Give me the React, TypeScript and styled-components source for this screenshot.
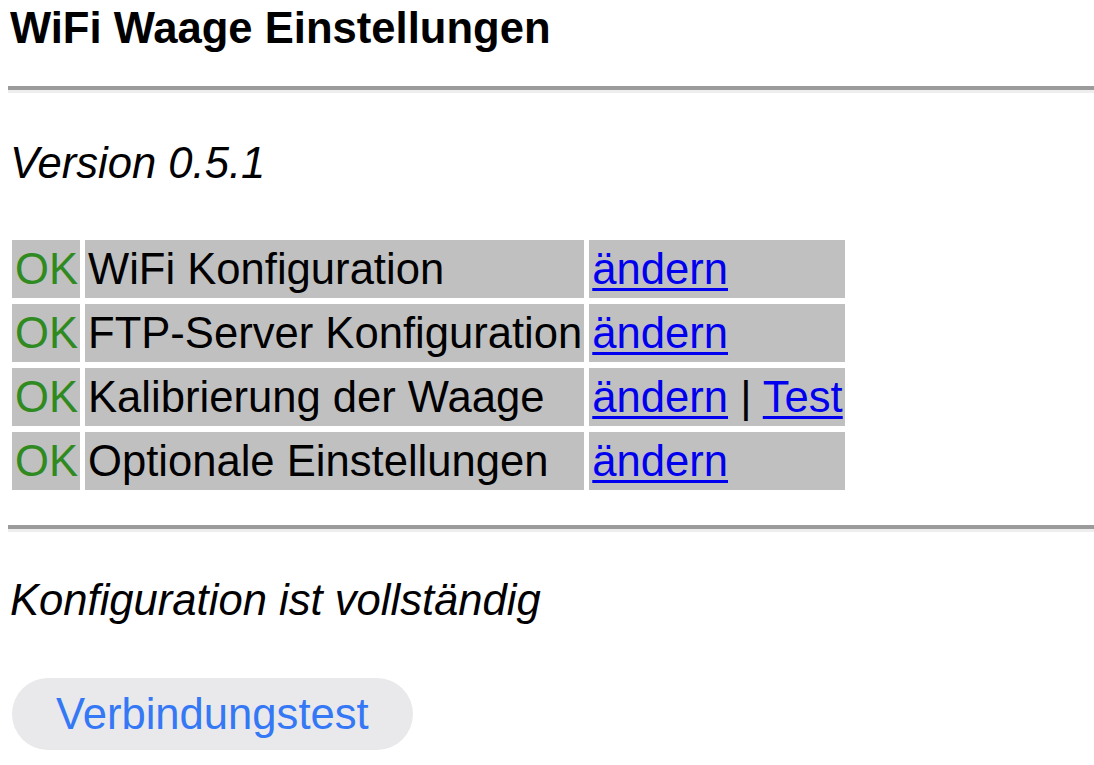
import React from "react";
import styled, { createGlobalStyle } from "styled-components";

const Global = createGlobalStyle`
  html, body { margin: 0; padding: 0; background: #ffffff; }
  body { font-family: "Liberation Sans", Arial, Helvetica, sans-serif; color: #000; }
`;

const Page = styled.div`
  padding: 0 0 0 8px;
  font-size: 43.6px;
`;

const Title = styled.h3`
  margin: 3px 0 0 0;
  padding-left: 2px;
  font-size: 43.6px;
  line-height: 50px;
  font-weight: bold;
`;

const Rule = styled.hr<{ $top: number }>`
  margin: ${(p) => p.$top}px 0 0 0;
  height: 0;
  border: none;
  border-top: 4px solid #9b9b9b;
  border-bottom: 3px solid #eeeeee;
`;

const Note = styled.p<{ $top: number }>`
  margin: ${(p) => p.$top}px 0 0 0;
  padding-left: 2px;
  font-style: italic;
  line-height: 50px;
`;

const Grid = styled.div`
  display: grid;
  grid-template-columns: auto auto auto;
  justify-content: start;
  column-gap: 5px;
  row-gap: 6px;
  margin: 52px 0 0 4px;
`;

const Cell = styled.div<{ $status?: boolean }>`
  background: #c0c0c0;
  padding: 3px 2px 3px 3px;
  line-height: 52px;
  white-space: nowrap;
  color: ${(p) => (p.$status ? "#2f8a1f" : "#000")};
`;

const Link = styled.a`
  color: #0000ee;
  text-decoration: underline;
  text-decoration-thickness: 3px;
  text-underline-offset: 4px;
`;

const Button = styled.button`
  margin: 53px 0 0 4px;
  height: 72px;
  padding: 0 44px;
  border: none;
  border-radius: 36px;
  background: #e9e9eb;
  color: #3478f6;
  font-family: "Liberation Sans", Arial, Helvetica, sans-serif;
  font-size: 43.6px;
  line-height: 72px;
`;

type Row = { label: string; test?: boolean };

const rows: Row[] = [
  { label: "WiFi Konfiguration" },
  { label: "FTP-Server Konfiguration" },
  { label: "Kalibrierung der Waage", test: true },
  { label: "Optionale Einstellungen" },
];

export default function App() {
  return (
    <>
      <Global />
      <Page>
        <Title>WiFi Waage Einstellungen</Title>
        <Rule $top={33} />
        <Note $top={45}>Version 0.5.1</Note>
        <Grid>
          {rows.map((r) => (
            <React.Fragment key={r.label}>
              <Cell $status>OK</Cell>
              <Cell>{r.label}</Cell>
              <Cell>
                <Link href="#">ändern</Link>
                {r.test && (
                  <>
                    {" | "}
                    <Link href="#">Test</Link>
                  </>
                )}
              </Cell>
            </React.Fragment>
          ))}
        </Grid>
        <Rule $top={35} />
        <Note $top={43}>Konfiguration ist vollständig</Note>
        <div>
          <Button>Verbindungstest</Button>
        </div>
      </Page>
    </>
  );
}
